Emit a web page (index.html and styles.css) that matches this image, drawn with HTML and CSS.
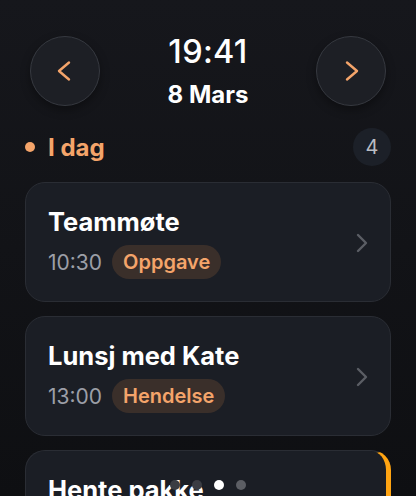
FILE: index.html
```html
<!DOCTYPE html>
<html lang="no">
<head>
<meta charset="utf-8">
<title>I dag</title>
<link rel="stylesheet" href="styles.css">
</head>
<body>
<div class="screen">
  <header class="top">
    <button class="nav-btn" aria-label="Forrige">
      <svg width="24" height="24" viewBox="0 0 24 24"><path d="M16 3.5 L6 12 L16 20.5" fill="none" stroke="#f4a46a" stroke-width="2.4" stroke-linecap="round" stroke-linejoin="round"/></svg>
    </button>
    <div class="clock">
      <div class="time">19:41</div>
      <div class="date">8 Mars</div>
    </div>
    <button class="nav-btn" aria-label="Neste">
      <svg width="24" height="24" viewBox="0 0 24 24"><path d="M8 3.5 L18 12 L8 20.5" fill="none" stroke="#f4a46a" stroke-width="2.4" stroke-linecap="round" stroke-linejoin="round"/></svg>
    </button>
  </header>

  <section class="section-head">
    <div class="section-title"><span class="dot"></span>I dag</div>
    <div class="count">4</div>
  </section>

  <div class="list">
    <div class="card">
      <div class="card-body">
        <div class="card-title">Teammøte</div>
        <div class="meta"><span class="clock-time">10:30</span><span class="pill">Oppgave</span></div>
      </div>
      <svg class="chev" width="24" height="24" viewBox="0 0 24 24"><path d="M8 4 L16 12 L8 20" fill="none" stroke="#5b5e65" stroke-width="2.4" stroke-linecap="round" stroke-linejoin="round"/></svg>
    </div>
    <div class="card">
      <div class="card-body">
        <div class="card-title">Lunsj med Kate</div>
        <div class="meta"><span class="clock-time">13:00</span><span class="pill">Hendelse</span></div>
      </div>
      <svg class="chev" width="24" height="24" viewBox="0 0 24 24"><path d="M8 4 L16 12 L8 20" fill="none" stroke="#5b5e65" stroke-width="2.4" stroke-linecap="round" stroke-linejoin="round"/></svg>
    </div>
    <div class="card card-flag">
      <div class="card-body">
        <div class="card-title">Hente pakke</div>
        <div class="meta"><span class="clock-time">16:00</span><span class="pill">Oppgave</span></div>
      </div>
    </div>
  </div>

  <div class="pager">
    <span class="pdot dim"></span>
    <span class="pdot dim"></span>
    <span class="pdot active"></span>
    <span class="pdot mid"></span>
  </div>
</div>
</body>
</html>
```

FILE: styles.css
```css
html, body {
  margin: 0;
  padding: 0;
  height: 100%;
  overflow: hidden;
}
body {
  background: linear-gradient(180deg, #16171c 0%, #121317 50%, #0e0f12 100%);
  font-family: Inter, "Noto Sans", sans-serif;
  color: #ffffff;
}
.screen {
  height: 496px;
  overflow: hidden;
  position: relative;
}
.top {
  display: flex;
  align-items: center;
  justify-content: space-between;
  padding: 36px 30px 0 30px;
}
.nav-btn {
  width: 70px;
  height: 70px;
  box-sizing: border-box;
  border-radius: 50%;
  background: #1d1f25;
  border: 1.5px solid #363940;
  display: flex;
  align-items: center;
  justify-content: center;
  padding: 0;
  box-shadow: 0 4px 10px rgba(0,0,0,0.35);
}
.clock {
  display: flex;
  flex-direction: column;
  align-items: center;
  margin: -2px 0 -2px 0;
}
.time {
  font-size: 32.5px;
  font-weight: 500;
  line-height: 34px;
  letter-spacing: 0.3px;
}
.date {
  font-size: 24px;
  font-weight: 700;
  line-height: 27px;
  margin-top: 12px;
}
.section-head {
  display: flex;
  align-items: center;
  justify-content: space-between;
  padding: 0 25px;
  margin-top: 22px;
}
.section-title {
  display: flex;
  align-items: center;
  gap: 13px;
  font-size: 24px;
  font-weight: 700;
  color: #f4a46a;
  line-height: 29px;
}
.dot {
  width: 10px;
  height: 10px;
  border-radius: 50%;
  background: #f4a46a;
}
.count {
  width: 38px;
  height: 38px;
  border-radius: 50%;
  background: #1c2028;
  color: #b9bcc3;
  font-size: 20px;
  display: flex;
  align-items: center;
  justify-content: center;
}
.list {
  display: flex;
  flex-direction: column;
  gap: 14px;
  padding: 0 25px;
  margin-top: 16px;
}
.card {
  display: flex;
  align-items: center;
  background: #1b1e25;
  border: 1px solid #2a2d34;
  border-radius: 20px;
  padding: 24px 16px 22px 22px;
  height: 120px;
  box-sizing: border-box;
}
.card-flag {
  border-right: 5px solid #ffa412;
}
.card-body {
  flex: 1;
  display: flex;
  flex-direction: column;
  gap: 8px;
}
.card-title {
  font-size: 25.5px;
  font-weight: 700;
  line-height: 30px;
}
.meta {
  display: flex;
  align-items: center;
  gap: 10px;
}
.clock-time {
  font-size: 21px;
  color: #9c9fa7;
}
.pill {
  height: 34px;
  padding: 0 11px;
  border-radius: 17px;
  background: #3a2f2a;
  color: #f4a46a;
  font-size: 20px;
  font-weight: 600;
  display: flex;
  align-items: center;
}
.pager {
  position: absolute;
  left: 0;
  right: 0;
  bottom: 6px;
  display: flex;
  justify-content: center;
  gap: 12px;
}
.pdot {
  width: 10px;
  height: 10px;
  border-radius: 50%;
}
.pdot.dim { background: #3b3d43; }
.pdot.active { background: #ffffff; }
.pdot.mid { background: #5c5e64; }
```
